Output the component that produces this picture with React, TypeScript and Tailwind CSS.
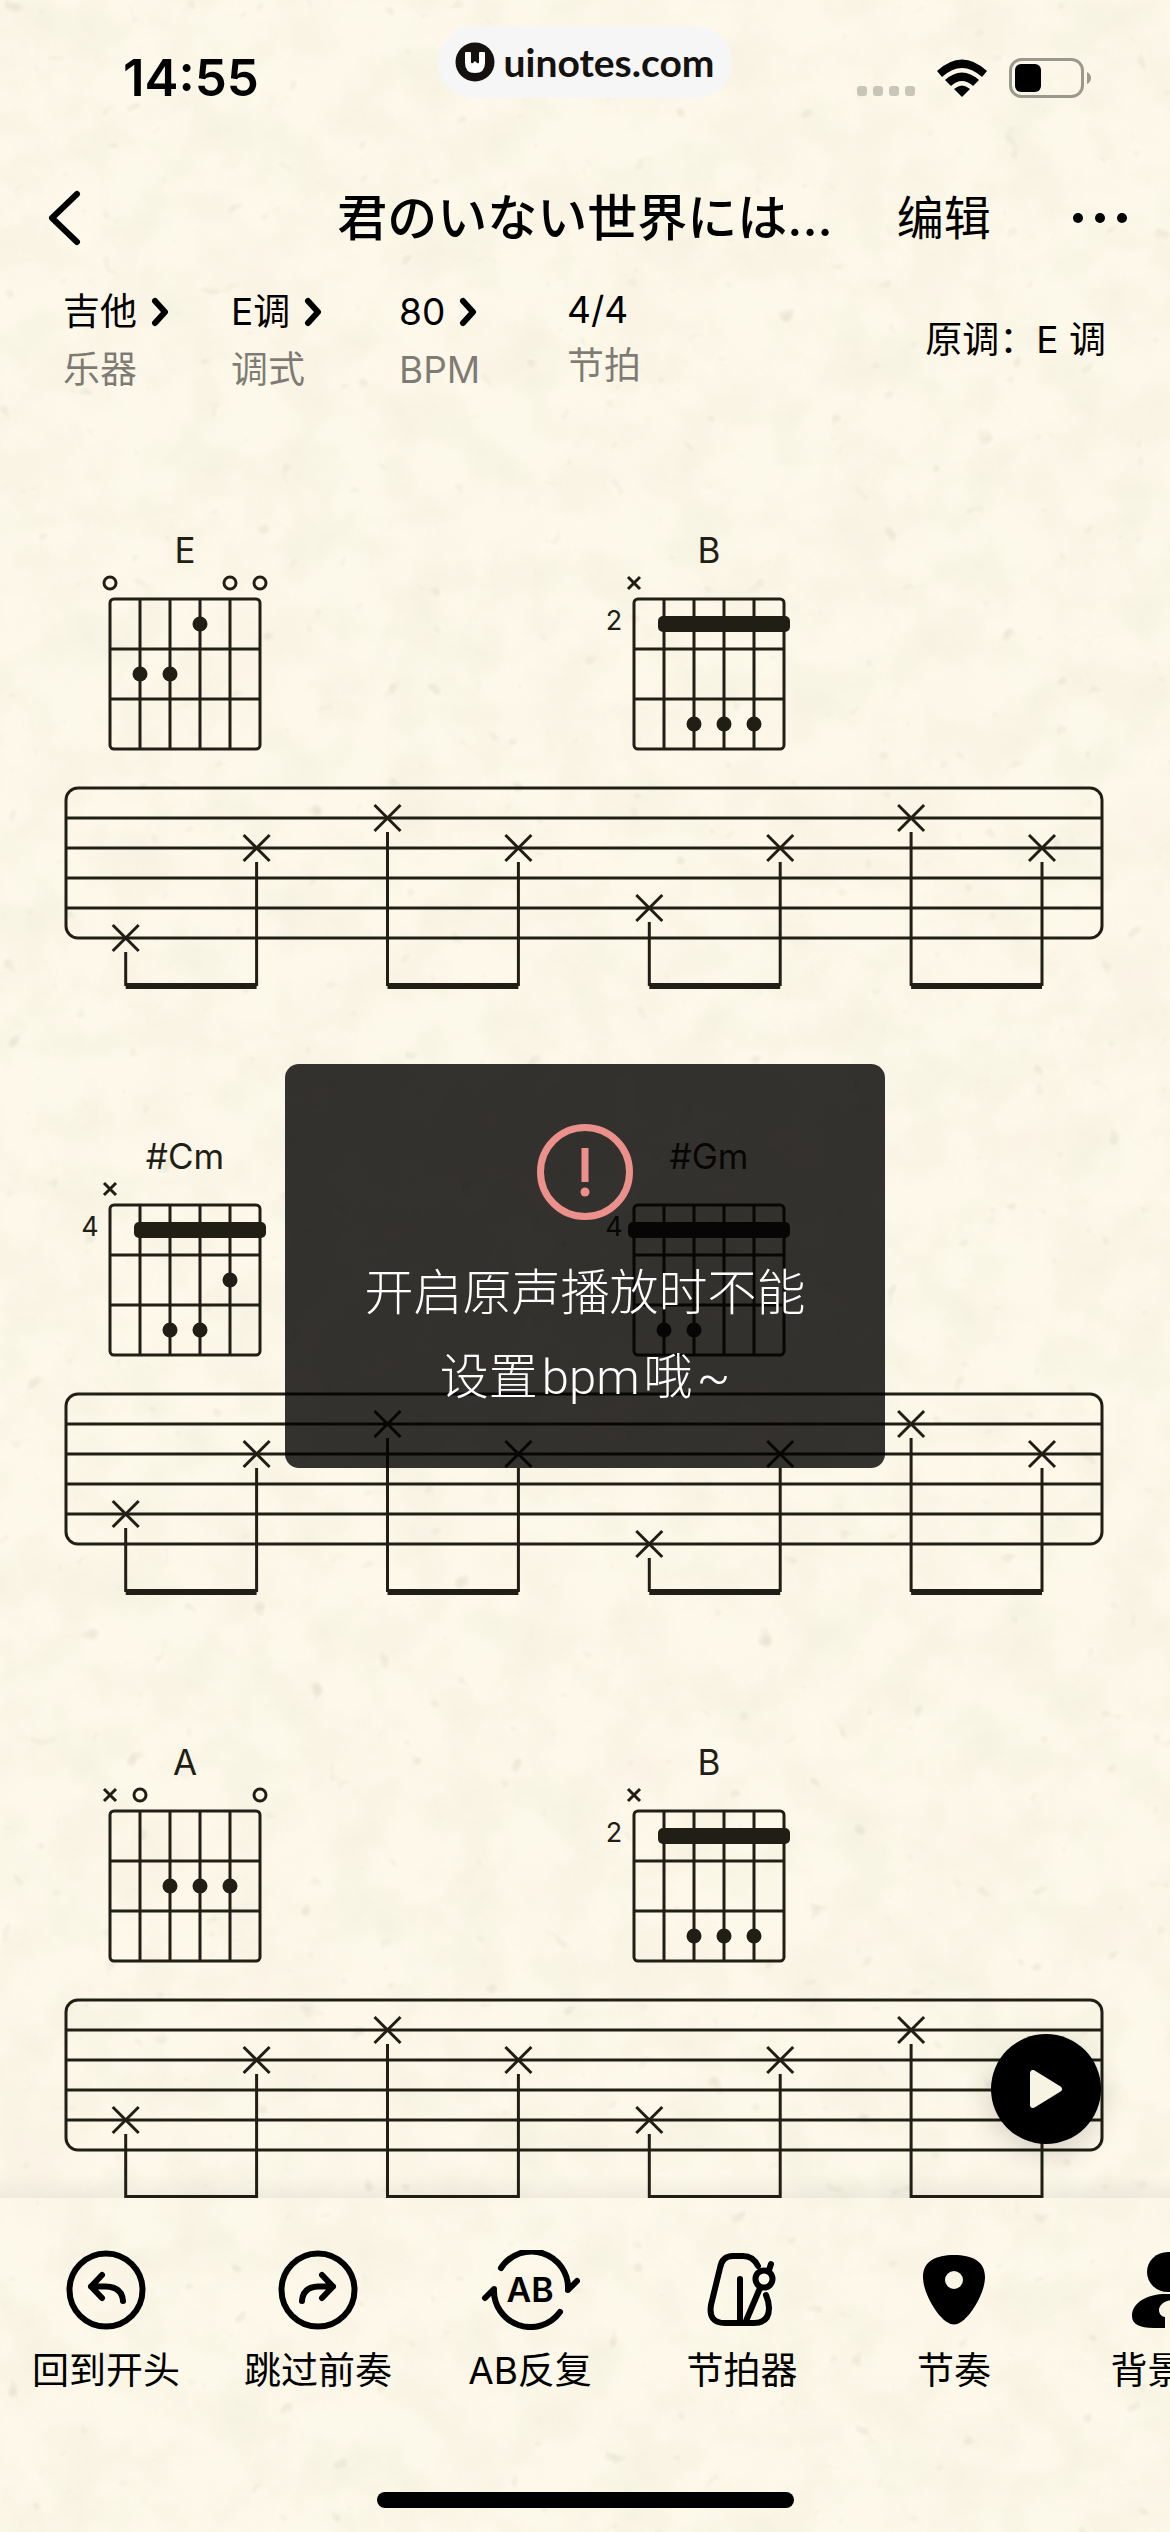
import { Fragment, type ReactNode } from "react";

type Chord = {
  name: string;
  fret?: number;
  open?: number[];
  muted?: number[];
  dots: [number, number][]; // [string, fret]
  barre?: number;
};

type System = {
  chords: Chord[];
  notes: number[];
};

const B: Chord = { name: "B", fret: 2, muted: [0], barre: 1, dots: [[2, 3], [3, 3], [4, 3]] };

const systems: System[] = [
  {
    chords: [{ name: "E", open: [0, 4, 5], dots: [[3, 1], [1, 2], [2, 2]] }, B],
    notes: [5, 2, 1, 2, 4, 2, 1, 2],
  },
  {
    chords: [
      { name: "#Cm", fret: 4, muted: [0], barre: 1, dots: [[4, 2], [2, 3], [3, 3]] },
      { name: "#Gm", fret: 4, barre: 0, dots: [[1, 3], [2, 3]] },
    ],
    notes: [4, 2, 1, 2, 5, 2, 1, 2],
  },
  {
    chords: [{ name: "A", muted: [0], open: [1, 5], dots: [[2, 2], [3, 2], [4, 2]] }, B],
    notes: [4, 2, 1, 2, 4, 2, 1, 2],
  },
];

const settings = [
  { label: "乐器", value: "吉他", menu: true },
  { label: "调式", value: "E调", menu: true },
  { label: "BPM", value: "80", menu: true },
  { label: "节拍", value: "4/4", menu: false },
];

function Paper() {
  return (
    <svg className="absolute inset-0 -z-10 h-full w-full" aria-hidden="true">
      <filter id="blotches" x="0" y="0" width="100%" height="100%" colorInterpolationFilters="sRGB">
        <feTurbulence type="fractalNoise" baseFrequency="0.018" numOctaves="4" seed="8" />
        <feColorMatrix values="0 0 0 0 0.93  0 0 0 0 0.92  0 0 0 0 0.85  2.4 0 0 0 -0.9" />
      </filter>
      <filter id="warmth" x="0" y="0" width="100%" height="100%" colorInterpolationFilters="sRGB">
        <feTurbulence type="fractalNoise" baseFrequency="0.01" numOctaves="3" seed="21" />
        <feColorMatrix values="0 0 0 0 0.99  0 0 0 0 0.95  0 0 0 0 0.9  2.4 0 0 0 -1" />
      </filter>
      <filter id="fibres" x="0" y="0" width="100%" height="100%" colorInterpolationFilters="sRGB">
        <feTurbulence type="fractalNoise" baseFrequency="0.04" numOctaves="2" seed="5" />
        <feColorMatrix values="0 0 0 0 0.8  0 0 0 0 0.79  0 0 0 0 0.72  3 0 0 0 -2.2" />
      </filter>
      <rect width="100%" height="100%" filter="url(#blotches)" opacity="0.4" />
      <rect width="100%" height="100%" filter="url(#warmth)" opacity="0.5" />
      <rect width="100%" height="100%" filter="url(#fibres)" opacity="0.7" />
    </svg>
  );
}

function ChordDiagram({ chord }: { chord: Chord }) {
  return (
    <figure className="flex w-[222px] flex-col items-center text-[#211e15]">
      <figcaption className="text-[35px] leading-10">{chord.name}</figcaption>
      <svg viewBox="-36 -29 222 182" className="w-full" fill="none" stroke="currentColor" strokeWidth="3">
        <rect x="0" y="0" width="150" height="150" rx="4" />
        <path d="M30 0V150M60 0V150M90 0V150M120 0V150M0 50H150M0 100H150" />
        {chord.open?.map((s) => (
          <circle key={s} cx={s * 30} cy="-16" r="6" />
        ))}
        {chord.muted?.map((s) => (
          <path key={s} d={`M${s * 30 - 6} -22l12 12m0 -12l-12 12`} />
        ))}
        <g fill="currentColor" stroke="none">
          {chord.dots.map(([s, f]) => (
            <circle key={`${s}-${f}`} cx={s * 30} cy={f * 50 - 25} r="7.5" />
          ))}
          {chord.barre !== undefined && (
            <rect x={chord.barre * 30 - 6} y="17" width={162 - chord.barre * 30} height="16" rx="5" />
          )}
          {chord.fret && (
            <text x="-20" y="31" fontSize="27" textAnchor="middle">
              {chord.fret}
            </text>
          )}
        </g>
      </svg>
    </figure>
  );
}

function Staff({ notes }: { notes: number[] }) {
  const x = (i: number) => 61.7 + i * 130.9;
  return (
    <svg viewBox="0 0 1042 208" className="mt-8 w-full text-[#211e15]" fill="none" stroke="currentColor" strokeWidth="3">
      <rect x="2" y="4" width="1036" height="150" rx="12" />
      <path d="M2 34H1038M2 64H1038M2 94H1038M2 124H1038" />
      {notes.map((line, i) => (
        <Fragment key={i}>
          <path d={`M${x(i) - 13} ${line * 30 - 9}l26 26m0 -26l-26 26`} />
          <path d={`M${x(i)} ${line * 30 + 18}V202`} />
          {i % 2 === 0 && <path d={`M${x(i)} 202H${x(i + 1)}`} strokeWidth="6" />}
        </Fragment>
      ))}
    </svg>
  );
}

function ToolIcon({ children }: { children: ReactNode }) {
  return (
    <svg viewBox="0 0 100 80" className="h-20 w-[100px]" fill="none" stroke="currentColor" strokeWidth="6" strokeLinecap="round" strokeLinejoin="round">
      {children}
    </svg>
  );
}

const tools: { label: string; icon: ReactNode }[] = [
  {
    label: "回到开头",
    icon: (
      <>
        <circle cx="50" cy="40" r="36.5" />
        <path d="M46 25L35 36.500L46 48M35 36.500H50Q66 37 67 51" />
      </>
    ),
  },
  {
    label: "跳过前奏",
    icon: (
      <>
        <circle cx="50" cy="40" r="36.5" />
        <path d="M54 25L65 36.500L54 48M65 36.500H50Q35 37 34 51" />
      </>
    ),
  },
  {
    label: "AB反复",
    icon: (
      <>
        <path d="M21 18A36.500 36.500 0 0 1 88 40L97 31" />
        <path d="M80 62A36.500 36.500 0 0 1 14 39L5 48" />
        <text x="50" y="52" fontSize="34" fontWeight="600" textAnchor="middle" fill="currentColor" stroke="none">
          AB
        </text>
      </>
    ),
  },
  {
    label: "节拍器",
    icon: (
      <>
        <path d="M66 16Q61 6 51 6H41Q30 6 28 18L19 55Q16 73 33 73H62Q77 73 77 58Q77 52 74 45" />
        <path d="M48 29V72M54 71L68 38M77 20L79 14" />
        <circle cx="72" cy="29" r="8.500" />
      </>
    ),
  },
  {
    label: "节奏",
    icon: (
      <path
        stroke="none"
        fill="currentColor"
        fillRule="evenodd"
        d="M50 5C68 5 81 11 81 27C81 43 67 66 57 72Q50 77 43 72C33 66 19 43 19 27C19 11 32 5 50 5ZM50 21a9 9 0 1 0 0 18a9 9 0 1 0 0 -18Z"
      />
    ),
  },
  {
    label: "背景音",
    icon: (
      <g stroke="none" fill="currentColor">
        <ellipse cx="52" cy="22" rx="21" ry="20" />
        <path d="M49 78H38C23 78 16 74 16 66C16 52 32 44 50 44H60V50H56C46 51 43 57 43 60C43 64 46 67 49 67Z" />
      </g>
    ),
  },
];

export default function App() {
  return (
    <div className="relative isolate flex h-screen flex-col overflow-hidden bg-[#fdf9ea] font-[Inter,'Noto_Sans_CJK_SC',sans-serif] text-black">
      <Paper />

      <div className="grid grid-cols-3 items-start pt-[26px]">
        <time className="pl-[123px] pt-5 text-[51px] font-semibold leading-[64px]">14:55</time>
        <div className="flex h-[72px] w-[294px] items-center justify-center gap-2 justify-self-center rounded-full bg-[#f6f6f7] text-[#15110f]">
          <svg viewBox="0 0 40 40" className="size-10">
            <circle cx="20" cy="20" r="19.500" fill="currentColor" />
            <path d="M10 11Q10 10 11 10H15Q16 10 16 11V20Q16 22 18 21L20 19L22 21Q24 22 24 20V11Q24 10 25 10H29Q30 10 30 11V21Q30 31 20 31T10 21Z" fill="#fff" />
          </svg>
          <span className="font-[Lato] text-[39px] font-bold leading-[48px]">uinotes.com</span>
        </div>
        <div className="flex items-center justify-end gap-[22px] pr-[79px] pt-[32px]">
          <svg viewBox="0 0 58 38" className="h-[38px] w-[58px]" fill="#c8c6b9">
            <rect x="0" y="27" width="10" height="10" rx="3" />
            <rect x="16" y="27" width="10" height="10" rx="3" />
            <rect x="32" y="27" width="10" height="10" rx="3" />
            <rect x="48" y="27" width="10" height="10" rx="3" />
          </svg>
          <svg viewBox="0 0 50 38" className="h-[38px] w-[50px]">
            <path d="M0 12Q25 -11 50 12L45 18Q25 0 5 18Z" />
            <path d="M8 21Q25 6 42 21L36 27Q25 17 14 27Z" />
            <path d="M17 30Q25 23 33 30L25 38Z" />
          </svg>
          <svg viewBox="0 0 82 40" className="h-10 w-[82px]">
            <rect x="1.500" y="1.500" width="72" height="37" rx="11" fill="none" stroke="#9b998e" strokeWidth="3" />
            <rect x="6" y="6" width="26" height="28" rx="6" />
            <path d="M78 14Q82 16 82 20T78 26Z" fill="#9b998e" />
          </svg>
        </div>
      </div>

      <header className="mt-[72px] grid grid-cols-[1fr_auto_1fr] items-center">
        <button type="button" aria-label="返回" className="pl-[47px]">
          <svg viewBox="0 0 34 56" className="h-14 w-[34px]" fill="none" stroke="currentColor" strokeWidth="6" strokeLinecap="round" strokeLinejoin="round">
            <path d="M30 4L5 28L30 52" />
          </svg>
        </button>
        <h1 className="whitespace-nowrap font-[Inter,'Noto_Sans_CJK_JP',sans-serif] text-[50px] font-medium leading-[72px]">君のいない世界には...</h1>
        <div className="flex items-center justify-between pl-16 pr-[42px]">
          <button type="button" className="text-[47px] leading-[72px]">编辑</button>
          <button type="button" aria-label="更多">
            <svg viewBox="0 0 56 12" className="h-3 w-14" fill="currentColor">
              <circle cx="6" cy="6" r="5" />
              <circle cx="28" cy="6" r="5" />
              <circle cx="50" cy="6" r="5" />
            </svg>
          </button>
        </div>
      </header>

      <div className="mt-7 flex items-center justify-between pl-[63px] pr-16 text-[37px]">
        <div className="flex items-start">
          {settings.map((s) => (
            <button key={s.label} type="button" className="w-[168px] text-left">
              <span className={s.menu ? "flex h-[60px] items-center gap-[14px] leading-[52px]" : "flex h-[56px] items-center leading-[52px]"}>
                {s.value}
                {s.menu && (
                  <svg viewBox="0 0 18 30" className="h-[30px] w-[18px]" fill="none" stroke="currentColor" strokeWidth="6" strokeLinecap="round" strokeLinejoin="round">
                    <path d="M4 4L14 15L4 26" />
                  </svg>
                )}
              </span>
              <span className="block leading-[56px] text-black/50">{s.label}</span>
            </button>
          ))}
        </div>
        <p className="leading-[56px]">原调：E 调</p>
      </div>

      <main className="relative min-h-0 flex-1 overflow-hidden">
        <div className="flex flex-col gap-36 px-16 pt-[132px]">
          {systems.map((system, i) => (
            <section key={i}>
              <div className="flex gap-[302px] pl-[10px]">
                {system.chords.map((chord) => (
                  <ChordDiagram key={chord.name} chord={chord} />
                ))}
              </div>
              <Staff notes={system.notes} />
            </section>
          ))}
        </div>
        <div className="absolute inset-x-0 bottom-0 h-6 bg-linear-to-t from-black/5 to-transparent" />
        <button type="button" aria-label="播放" className="absolute bottom-[54px] right-[69px] flex size-[110px] items-center justify-center rounded-full bg-black text-[#f8f4e4] shadow-[0_10px_30px_rgba(0,0,0,0.15)]">
          <svg viewBox="0 0 34 38" className="h-[38px] w-[34px]" fill="currentColor" stroke="currentColor" strokeWidth="6" strokeLinejoin="round">
            <path d="M4 3V35L30 19Z" />
          </svg>
        </button>
      </main>

      <footer className="flex shrink-0 flex-col items-center pb-6 pt-[52px]">
        <nav className="flex w-full overflow-hidden">
          {tools.map((tool) => (
            <button key={tool.label} type="button" className="flex w-[212px] shrink-0 flex-col items-center gap-3">
              <ToolIcon>{tool.icon}</ToolIcon>
              <span className="text-[37px] leading-[58px]">{tool.label}</span>
            </button>
          ))}
        </nav>
        <div className="mt-[92px] h-4 w-[417px] rounded-full bg-black" />
      </footer>

      <div role="alert" className="absolute left-1/2 top-1/2 flex w-[600px] -translate-x-1/2 -translate-y-1/2 flex-col items-center rounded-[14px] bg-[#010000]/80 px-[75px] pb-[48px] pt-[60px]">
        <svg viewBox="0 0 96 96" className="size-24" fill="none" stroke="#ec908b" strokeWidth="7">
          <circle cx="48" cy="48" r="44.500" />
          <path d="M48 24V58" />
          <circle cx="48" cy="68" r="4.500" fill="#ec908b" stroke="none" />
        </svg>
        <p className="mt-8 whitespace-nowrap text-center font-[Roboto,'Noto_Sans_CJK_SC',sans-serif] text-[49px] font-light leading-[84px] text-white">
          开启原声播放时不能
          <br />
          设置<span className="mx-1">bpm</span>哦<span className="ml-1">~</span>
        </p>
      </div>
    </div>
  );
}
